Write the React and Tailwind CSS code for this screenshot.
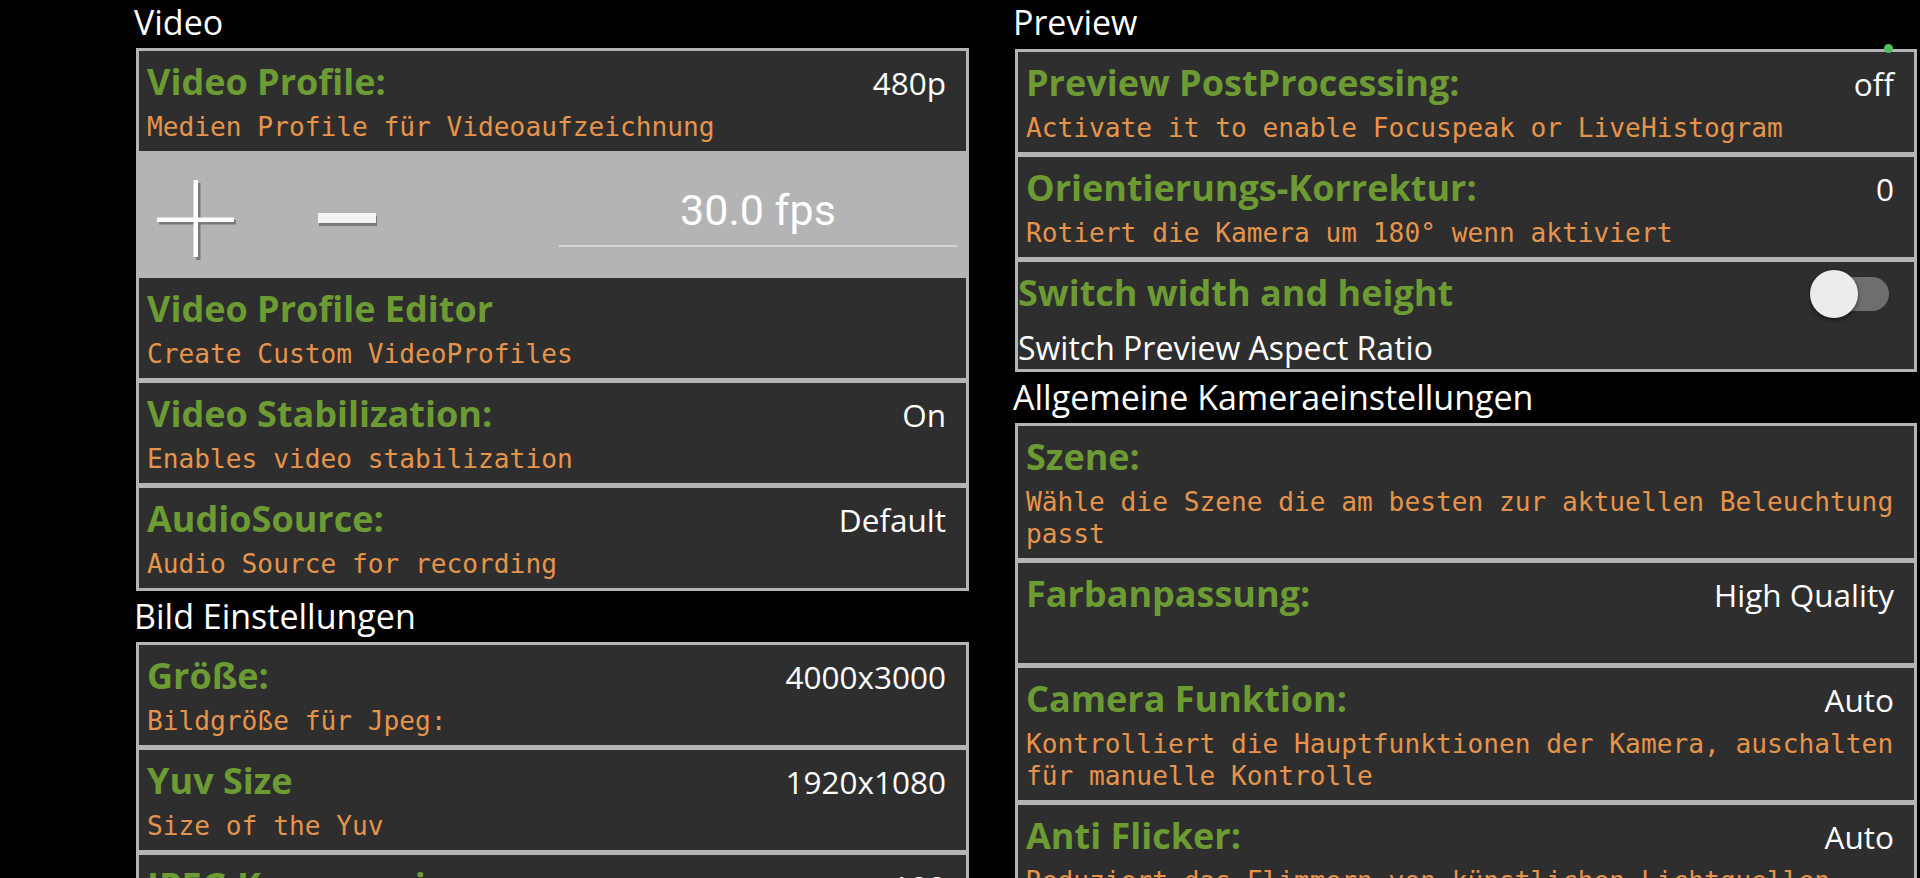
import React from "react";

const TITLE = "font-['Open_Sans',sans-serif] font-bold text-[36px] text-[#6c9b34] whitespace-nowrap";
const VALUE = "font-['Open_Sans',sans-serif] text-[31.5px] text-white whitespace-nowrap";
const DESC = "font-['DejaVu_Sans_Mono',monospace] text-[26.2px] leading-[32px] text-[#e6944b]";

function Header({ children, first, h }) {
  return (
    <div className={(first ? h : "h-[51px] pt-[3px]") + " -ml-[2px] shrink-0"}>
      <div className="font-['Open_Sans',sans-serif] text-[34px] leading-[44px] text-white whitespace-nowrap">
        {children}
      </div>
    </div>
  );
}

function Panel({ children }) {
  return <div className="bg-[#b4b4b4] p-[3px] flex flex-col gap-[5px] shrink-0">{children}</div>;
}

function Row({ title, desc, value }) {
  return (
    <div className="bg-[#2e2e2e] pl-[8px] pt-[10px] pb-[8px] shrink-0">
      <div className="flex items-baseline justify-between h-[42px] leading-[42px] pr-[20px]">
        <span className={TITLE}>{title}</span>
        {value ? <span className={VALUE}>{value}</span> : null}
      </div>
      <div className={DESC + " mt-[8px] min-h-[32px] pr-[4px]"}>{desc}</div>
    </div>
  );
}

function PlusIcon() {
  return (
    <svg width="82" height="82" viewBox="0 0 82 82">
      <rect x="2" y="40" width="77" height="4.5" fill="#7a7a7a" />
      <rect x="39" y="3" width="4.5" height="77" fill="#7a7a7a" />
      <rect x="0" y="37.5" width="77" height="4.5" fill="#ffffff" />
      <rect x="36.5" y="0" width="4.5" height="77" fill="#ffffff" />
    </svg>
  );
}

function MinusIcon() {
  return (
    <svg width="62" height="16" viewBox="0 0 62 16">
      <rect x="1" y="3" width="58" height="10" fill="#7a7a7a" />
      <rect x="0" y="0" width="58" height="10" fill="#f4f4f4" />
    </svg>
  );
}

function FpsBlock() {
  return (
    <div className="h-[117px] flex items-start shrink-0">
      <div className="ml-[18px] mt-[24px]">
        <PlusIcon />
      </div>
      <div className="ml-[79px] mt-[57px]">
        <MinusIcon />
      </div>
      <div className="ml-auto mr-[9px] w-[398px] flex flex-col items-center pt-[29px]">
        <div className="font-['Roboto',sans-serif] text-[43px] leading-[50px] text-white whitespace-nowrap">
          30.0 fps
        </div>
        <div className="mt-[10px] h-[2px] w-full bg-[#d4d4d4]" />
      </div>
    </div>
  );
}

function SwitchRow() {
  return (
    <div className="bg-[#2e2e2e] h-[107px] flex items-start shrink-0">
      <div className="flex-1 pt-[10px]">
        <div className={TITLE + " leading-[42px]"}>Switch width and height</div>
        <div className="mt-[15px] font-['Open_Sans',sans-serif] text-[32px] leading-[38px] text-white whitespace-nowrap">
          Switch Preview Aspect Ratio
        </div>
      </div>
      <div className="relative w-[79px] h-[48px] mt-[8px] mr-[25px]">
        <div className="absolute right-0 top-[7px] h-[34px] w-[70px] rounded-full bg-[#6e6e6e]" />
        <div className="absolute left-0 top-0 h-[48px] w-[48px] rounded-full bg-[#ececec] shadow-[0_2px_4px_rgba(0,0,0,0.5)]" />
      </div>
    </div>
  );
}

export default function App() {
  return (
    <div className="w-[1920px] h-[878px] bg-black overflow-hidden flex pl-[136px] gap-[46px]">
      <div className="w-[833px] flex flex-col shrink-0">
        <Header first h="h-[48px]">Video</Header>
        <Panel>
          <Row title="Video Profile:" desc="Medien Profile für Videoaufzeichnung" value="480p" />
          <FpsBlock />
          <Row title="Video Profile Editor" desc="Create Custom VideoProfiles" />
          <Row title="Video Stabilization:" desc="Enables video stabilization" value="On" />
          <Row title="AudioSource:" desc="Audio Source for recording" value="Default" />
        </Panel>
        <Header>Bild Einstellungen</Header>
        <Panel>
          <Row title="Größe:" desc="Bildgröße für Jpeg:" value="4000x3000" />
          <Row title="Yuv Size" desc="Size of the Yuv" value="1920x1080" />
          <Row title="JPEG Kompression:" desc="Jpeg Qualität" value="100" />
        </Panel>
      </div>
      <div className="w-[902px] flex flex-col shrink-0 relative">
        <Header first h="h-[49px]">Preview</Header>
        <Panel>
          <Row title="Preview PostProcessing:" desc="Activate it to enable Focuspeak or LiveHistogram" value="off" />
          <Row title="Orientierungs-Korrektur:" desc="Rotiert die Kamera um 180° wenn aktiviert" value="0" />
          <SwitchRow />
        </Panel>
        <Header>Allgemeine Kameraeinstellungen</Header>
        <Panel>
          <Row title="Szene:" desc="Wähle die Szene die am besten zur aktuellen Beleuchtung passt" />
          <Row title="Farbanpassung:" desc="" value="High Quality" />
          <Row title="Camera Funktion:" desc="Kontrolliert die Hauptfunktionen der Kamera, auschalten für manuelle Kontrolle" value="Auto" />
          <Row title="Anti Flicker:" desc="Reduziert das Flimmern von künstlichen Lichtquellen" value="Auto" />
        </Panel>
        <div className="absolute left-[869px] top-[44px] w-[9px] h-[9px] rounded-full bg-[#4fbf5f]" />
      </div>
    </div>
  );
}
